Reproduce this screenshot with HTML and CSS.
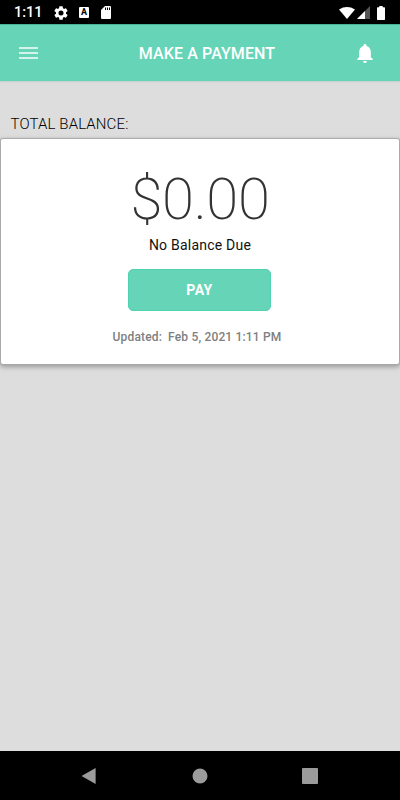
FILE: index.html
```html
<!DOCTYPE html>
<html lang="en">
<head>
<meta charset="utf-8">
<title>Make a Payment</title>
<link rel="stylesheet" href="styles.css">
</head>
<body>
<div class="status">
  <span class="clock">1:11</span>
  <svg class="gear" viewBox="2 2 20 20"><path fill="#fff" d="M19.14 12.94c.04-.3.06-.61.06-.94s-.02-.64-.07-.94l2.03-1.58a.5.5 0 0 0 .12-.61l-1.92-3.32a.49.49 0 0 0-.59-.22l-2.39.96a7 7 0 0 0-1.62-.94l-.36-2.54a.48.48 0 0 0-.48-.41h-3.84a.47.47 0 0 0-.47.41l-.36 2.54c-.59.24-1.13.57-1.62.94l-2.39-.96a.48.48 0 0 0-.59.22L2.74 8.87a.47.47 0 0 0 .12.61l2.03 1.58a6 6 0 0 0 0 1.88l-2.03 1.58a.5.5 0 0 0-.12.61l1.92 3.32c.12.22.37.29.59.22l2.39-.96c.5.38 1.03.7 1.62.94l.36 2.54c.05.24.24.41.48.41h3.84c.24 0 .44-.17.47-.41l.36-2.54a7 7 0 0 0 1.62-.94l2.39.96c.22.08.47 0 .59-.22l1.92-3.32a.47.47 0 0 0-.12-.61zM12 15.6a3.6 3.6 0 1 1 0-7.2 3.6 3.6 0 0 1 0 7.2z"/></svg>
  <span class="badge">A</span>
  <svg class="sd" viewBox="0 0 10 13"><path fill="#fff" d="M4 0h5a1 1 0 0 1 1 1v11a1 1 0 0 1-1 1H1a1 1 0 0 1-1-1V4z"/><path stroke="#000" d="M4.5 1.5v2.5M6.5 1.5v2.5M8.5 1.5v2.5"/></svg>
  <svg class="wifi" viewBox="0 0 16 12"><path fill="#fff" d="M0 2.4Q8-2.4 16 2.4L8 12z"/></svg>
  <svg class="signal" viewBox="0 0 13 13"><path fill="#555" d="M13 0v13H0z"/><path fill="#fff" d="M8 5v8H0z"/></svg>
  <svg class="battery" viewBox="0 0 8 14"><path fill="#fff" d="M2.3 0h3.4v1.3H7.3a.7.7 0 0 1 .7.7v11.3a.7.7 0 0 1-.7.7H.7a.7.7 0 0 1-.7-.7V2a.7.7 0 0 1 .7-.7h1.6z"/></svg>
</div>
<header class="appbar">
  <div class="menu"><i></i><i></i><i></i></div>
  <h1>MAKE A PAYMENT</h1>
  <svg class="bell" viewBox="4 2.5 16 19.5"><path fill="#fff" d="M12 22a2 2 0 0 0 2-2h-4a2 2 0 0 0 2 2zm6-6v-5c0-3.07-1.64-5.64-4.5-6.32V4a1.5 1.5 0 0 0-3 0v.68C7.63 5.36 6 7.92 6 11v5l-2 2v1h16v-1z"/></svg>
</header>
<main>
  <h2>TOTAL BALANCE:</h2>
  <section class="card">
    <div class="amount">$0.00</div>
    <div class="due">No Balance Due</div>
    <button class="pay">PAY</button>
    <div class="updated"><span>Updated:</span><span>Feb 5, 2021 1:11 PM</span></div>
  </section>
</main>
<nav>
  <svg class="back" viewBox="0 0 16 18"><path fill="#9b9b9b" d="M14.6.9v16.2L.5 9z"/></svg>
  <svg viewBox="0 0 16 18"><circle cx="8" cy="9" r="7.5" fill="#9b9b9b"/></svg>
  <svg viewBox="0 0 16 18"><rect y="1" width="16" height="16" rx="1" fill="#9b9b9b"/></svg>
</nav>
</body>
</html>
```
FILE: styles.css
```css
* { box-sizing: border-box; }
body {
  margin: 0;
  height: 800px;
  display: flex;
  flex-direction: column;
  overflow: hidden;
  background: #ddd;
  font-family: Roboto, sans-serif;
}
svg { display: block; flex: none; }
h1, h2 { margin: 0; font-weight: 400; white-space: nowrap; }
.status {
  height: 24px;
  flex: none;
  display: flex;
  align-items: center;
  padding: 1px 15px 0 14px;
  background: #000;
  color: #fff;
}
.clock { width: 40px; font-size: 14.5px; line-height: 20px; font-weight: 500; }
.gear { width: 14px; height: 14px; }
.badge {
  width: 10px;
  height: 11px;
  margin-left: 11px;
  border-radius: 1px;
  background: #fff;
  color: #000;
  font-size: 9px;
  line-height: 11px;
  font-weight: 700;
  text-align: center;
}
.sd { width: 10px; height: 13px; margin-left: 12px; }
.wifi { width: 16px; height: 12px; margin-left: auto; }
.signal { width: 13px; height: 13px; margin-left: 2px; }
.battery { width: 8px; height: 14px; margin-left: 7px; }
.appbar {
  height: 57px;
  flex: none;
  display: grid;
  grid-template-columns: 60px 1fr 60px;
  align-items: center;
  background: #65d4b7;
  border-top: 1px solid #49b397;
  box-shadow: 0 1px 1px #c8d1ce;
  color: #fff;
}
.menu { display: grid; gap: 3px; margin-left: 19px; width: 19px; }
.menu i { height: 2px; background: #d4f4eb; }
.appbar h1 { justify-self: center; margin: 2px 0 0 14px; font-size: 16px; line-height: 20px; font-weight: 500; letter-spacing: .1px; }
.appbar .bell { width: 16px; height: 19px; margin-left: 17px; }
main { flex: 1; }
h2 { padding: 33px 0 0 10.5px; font-size: 15px; line-height: 20px; font-weight: 300; letter-spacing: .13px; color: #000; }
.card {
  height: 225px;
  margin: 5px 1px 0;
  display: flex;
  flex-direction: column;
  align-items: center;
  background: #fff;
  border-radius: 2px;
  box-shadow: 0 0 1px 1px #aaa, 0 2px 5px 1px #999;
}
.amount { margin-top: 25px; font-size: 58px; line-height: 70px; font-weight: 200; letter-spacing: -.3px; color: #333; }
.due { margin-top: 1px; font-size: 14px; line-height: 20px; letter-spacing: .22px; color: #111; }
.pay {
  width: 143px;
  height: 42px;
  margin: 14px 1px 0 0;
  padding: 0;
  border: 1px solid #4fd2af;
  border-radius: 5px;
  background: #65d4b7;
  color: #fff;
  font: 700 14px/20px Roboto, sans-serif;
  letter-spacing: .4px;
}
.updated { display: flex; gap: 6px; margin: 16px 6px 0 0; font-size: 12px; line-height: 20px; font-weight: 500; letter-spacing: .17px; color: #808080; }
nav {
  height: 49px;
  flex: none;
  display: flex;
  justify-content: center;
  align-items: center;
  gap: 94px;
  background: #000;
}
nav svg { width: 16px; height: 18px; }
nav .back { margin: 0 1px 0 -1px; }
```
